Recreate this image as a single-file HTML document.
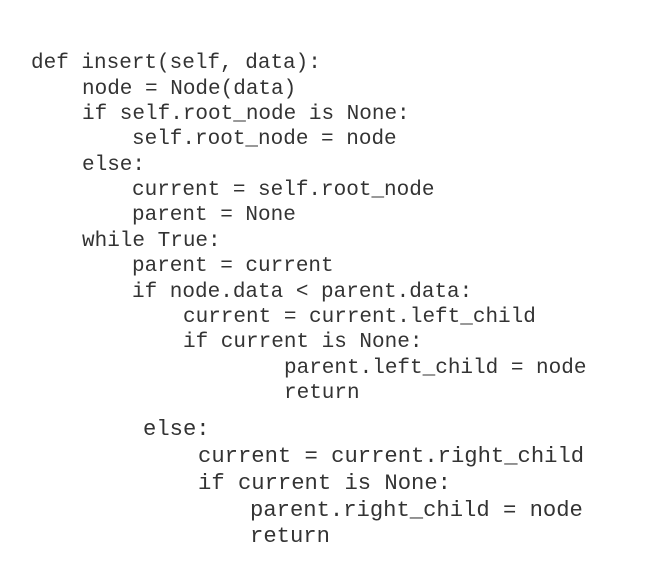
<!DOCTYPE html>
<html><head><meta charset="utf-8"><style>
html,body{margin:0;padding:0;background:#fff;}
body{width:655px;height:583px;position:relative;overflow:hidden;}
.l{position:absolute;white-space:pre;font-family:"Liberation Mono","DejaVu Sans Mono",monospace;font-size:21px;line-height:26px;color:#333;}
.b{font-size:22.2px;}
</style></head><body>
<div class="l" style="left:31px;top:51px">def insert(self, data):</div>
<div class="l" style="left:82px;top:77px">node = Node(data)</div>
<div class="l" style="left:82px;top:102px">if self.root_node is None:</div>
<div class="l" style="left:132px;top:127px">self.root_node = node</div>
<div class="l" style="left:82px;top:153px">else:</div>
<div class="l" style="left:132px;top:178px">current = self.root_node</div>
<div class="l" style="left:132px;top:203px">parent = None</div>
<div class="l" style="left:82px;top:229px">while True:</div>
<div class="l" style="left:132px;top:254px">parent = current</div>
<div class="l" style="left:132px;top:280px">if node.data &lt; parent.data:</div>
<div class="l" style="left:183px;top:305px">current = current.left_child</div>
<div class="l" style="left:183px;top:330px">if current is None:</div>
<div class="l" style="left:284px;top:356px">parent.left_child = node</div>
<div class="l" style="left:284px;top:381px">return</div>
<div class="l b" style="left:143px;top:417px">else:</div>
<div class="l b" style="left:198px;top:444px">current = current.right_child</div>
<div class="l b" style="left:198px;top:471px">if current is None:</div>
<div class="l b" style="left:250px;top:498px">parent.right_child = node</div>
<div class="l b" style="left:250px;top:524px">return</div>
</body></html>
